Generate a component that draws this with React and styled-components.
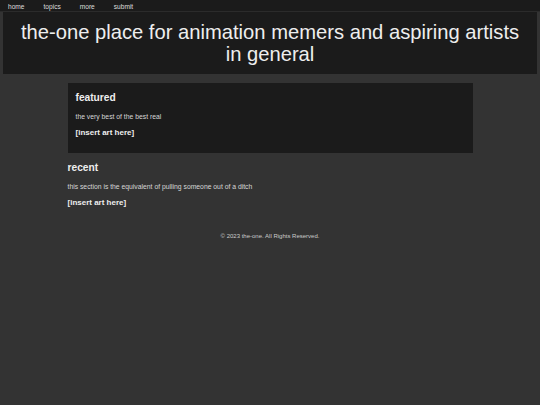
import styled, { createGlobalStyle } from "styled-components";

const GlobalStyle = createGlobalStyle`
    html, body {
        margin: 0;
        padding: 0;
        background: #333333;
        color: #e6e6e6;
        font-family: "Liberation Sans", Arial, sans-serif;
    }
`;

const Nav = styled.nav`
    display: flex;
    height: 10px;
    padding: 1px 8px 0;
    gap: 19px;
    align-items: center;
    background: #1b1b1b;
    border-bottom: 1px solid #2b2b2b;
`;

const NavLink = styled.a`
    color: #dddddd;
    font-size: 6.6px;
    text-decoration: none;
`;

const Header = styled.header`
    margin: 0 3px;
    padding: 9px 10px;
    background: #1b1b1b;
    text-align: center;
`;

const Title = styled.h1`
    margin: 0;
    font-size: 20.2px;
    font-weight: normal;
    line-height: 22px;
    color: #eeeeee;
`;

const Main = styled.main`
    width: 75%;
    margin: 9px auto 0;
`;

const Section = styled.section`
    padding: ${(p) => (p.$boxed ? "9px 8px 7px" : "0")};
    background: ${(p) => (p.$boxed ? "#1b1b1b" : "transparent")};
    min-height: ${(p) => (p.$boxed ? "54px" : "0")};
    margin-bottom: 9px;
`;

const Heading = styled.h2`
    margin: 0 0 10px;
    font-size: 10.2px;
    font-weight: bold;
    color: #eeeeee;
`;

const Blurb = styled.p`
    margin: 0 0 8px;
    font-size: 6.8px;
    color: #d6d6d6;
`;

const Art = styled.p`
    margin: 0;
    font-size: 8px;
    font-weight: bold;
    color: #eeeeee;
`;

const Footer = styled.footer`
    margin-top: 26px;
    text-align: center;
    font-size: 6px;
    color: #cccccc;
`;

export default function App() {
    return (
        <>
            <GlobalStyle />
            <Nav>
                <NavLink href="#">home</NavLink>
                <NavLink href="#">topics</NavLink>
                <NavLink href="#">more</NavLink>
                <NavLink href="#">submit</NavLink>
            </Nav>
            <Header>
                <Title>the-one place for animation memers and aspiring artists in general</Title>
            </Header>
            <Main>
                <Section $boxed>
                    <Heading>featured</Heading>
                    <Blurb>the very best of the best real</Blurb>
                    <Art>[insert art here]</Art>
                </Section>
                <Section>
                    <Heading>recent</Heading>
                    <Blurb>this section is the equivalent of pulling someone out of a ditch</Blurb>
                    <Art>[insert art here]</Art>
                </Section>
                <Footer>© 2023 the-one. All Rights Reserved.</Footer>
            </Main>
        </>
    );
}
